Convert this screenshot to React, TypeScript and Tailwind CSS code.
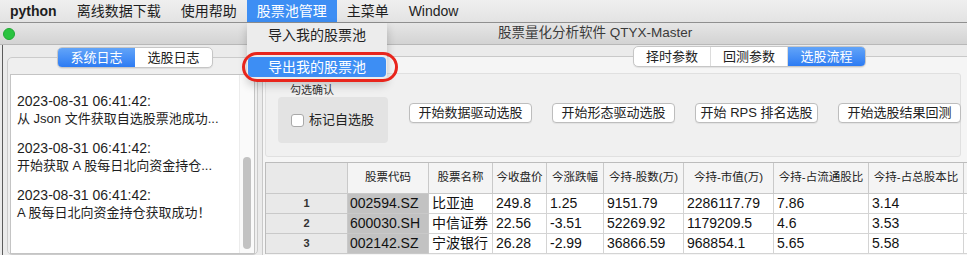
const logs = [
  ["2023-08-31 06:41:42:", "从 Json 文件获取自选股票池成功..."],
  ["2023-08-31 06:41:42:", "开始获取 A 股每日北向资金持仓..."],
  ["2023-08-31 06:41:42:", "A 股每日北向资金持仓获取成功！"],
];

const headers = ["", "股票代码", "股票名称", "今收盘价", "今涨跌幅", "今持-股数(万)", "今持-市值(万)", "今持-占流通股比", "今持-占总股本比", ""];

const rows = [
  ["1", "002594.SZ", "比亚迪", "249.8", "1.25", "9151.79", "2286117.79", "7.86", "3.14"],
  ["2", "600030.SH", "中信证券", "22.56", "-3.51", "52269.92", "1179209.5", "4.6", "3.53"],
  ["3", "002142.SZ", "宁波银行", "26.28", "-2.99", "36866.59", "968854.1", "5.65", "5.58"],
];

function Segmented({ items, active }: { items: string[]; active: number }) {
  return (
    <div className="flex h-[21px] rounded-[5px] border border-[#c6c6c6] bg-white shadow-[0_1px_1px_rgba(0,0,0,0.08)] overflow-hidden">
      {items.map((t, i) => (
        <div
          key={t}
          className={
            i === active
              ? "w-[77px] flex items-center justify-center text-[13px] text-white bg-gradient-to-b from-[#62a4f8] to-[#2c7bf3]"
              : "w-[77px] flex items-center justify-center text-[13px] text-[#222] border-r border-[#dcdcdc] last:border-r-0"
          }
        >
          {t}
        </div>
      ))}
    </div>
  );
}

function MenuBar() {
  const items = ["离线数据下载", "使用帮助", "股票池管理", "主菜单", "Window"];
  return (
    <div className="h-[23px] shrink-0 flex border-b border-[#8f8f8f] bg-gradient-to-b from-[#efefef] to-[#e3e3e3] text-[14px] text-[#1e1e1e]">
      <div className="px-[10px] flex items-center font-bold">python</div>
      {items.map((t) => (
        <div
          key={t}
          className={t === "股票池管理" ? "px-[10px] flex items-center bg-[#3d8ef4] text-white" : "px-[10px] flex items-center"}
        >
          {t}
        </div>
      ))}
    </div>
  );
}

function TitleBar() {
  return (
    <div className="h-[22px] shrink-0 flex items-center border-b border-[#b8b8b8] bg-gradient-to-b from-[#e6e6e6] to-[#d3d3d3]">
      <div className="ml-[3px] w-[12px] h-[12px] rounded-full bg-[#2ac340] border border-[#20a934]" />
      <div className="ml-[483px] text-[13.5px] text-[#3a3a3a]">股票量化分析软件 QTYX-Master</div>
    </div>
  );
}

function LogPanel() {
  return (
    <div className="w-[262px] shrink-0 pl-[2px] flex">
      <div className="flex-1 border-l border-[#5c5c5c] pl-[4px] pt-[2px] flex flex-col">
        <div className="relative z-10 flex pl-[50px]">
          <Segmented items={["系统日志", "选股日志"]} active={0} />
        </div>
        <div className="-mt-[11px] w-[251px] h-[220px] border border-[#cbcbcb] rounded-[5px] bg-[#efefef] pt-[16px] px-[2px]">
          <div className="relative h-[180px] border border-[#c4c4c4] bg-white pt-[18px] pl-[6px] leading-[17px] text-[#1e1e1e]">
            {logs.map(([a, b], i) => (
              <div key={i} className={i === 0 ? "" : "mt-[13px]"}>
                <div className="text-[14px]">{a}</div>
                <div className="text-[13px]">{b}</div>
              </div>
            ))}
            <div className="absolute right-0 top-0 bottom-0 w-[15px] border-l border-[#ececec] bg-[#fafafa]">
              <div className="absolute left-[3px] top-[82px] w-[8px] h-[92px] rounded-full bg-[#c2c2c2]" />
            </div>
          </div>
        </div>
      </div>
    </div>
  );
}

function StockTable() {
  return (
    <div className="grid grid-cols-[82px_81px_64px_54px_57px_80px_90px_95px_95px_20px] border-t border-l border-[#bcbcbc] bg-white">
      {headers.map((h, i) => (
        <div
          key={i}
          className={
            i === 0
              ? "h-[31px] border-r border-b border-[#c9c9c9] bg-[#e9e9e9]"
              : "h-[31px] flex items-center justify-center border-r border-b border-[#c9c9c9] bg-[#f4f4f4] text-[11.5px] text-[#222] whitespace-nowrap"
          }
        >
          {h}
        </div>
      ))}
      {rows.map((r) => (
        <>
          {r.map((c, j) => (
            <div
              key={r[0] + j}
              className={
                j === 0
                  ? "h-[20px] flex items-center justify-center border-r border-b border-[#c9c9c9] bg-[#e9e9e9] text-[11px] font-bold text-[#333]"
                  : j === 1
                  ? "h-[20px] flex items-center pl-[2px] border-r border-b border-[#c9c9c9] bg-[#c2c2c2] text-[14px] text-[#111]"
                  : "h-[20px] flex items-center pl-[3px] border-r border-b border-[#d4d4d4] text-[14px] text-[#111] whitespace-nowrap overflow-hidden"
              }
            >
              {c}
            </div>
          ))}
          <div key={r[0] + "x"} className="h-[20px] border-b border-[#d4d4d4]" />
        </>
      ))}
    </div>
  );
}

function MainPanel() {
  const buttons = ["开始数据驱动选股", "开始形态驱动选股", "开始 RPS 排名选股", "开始选股结果回测"];
  return (
    <div className="flex-1 min-w-0 overflow-hidden flex flex-col">
      <div className="relative z-10 flex justify-end pr-[101px] pt-[1px]">
        <Segmented items={["择时参数", "回测参数", "选股流程"]} active={2} />
      </div>
      <div className="-mt-[11px] flex-1 border-t border-l border-[#c9c9c9] bg-[#f5f5f5] pl-[2px] pt-[16px]">
        <div className="w-[696px] h-[84px] flex items-start border border-[#e0e0e0] rounded-[3px] bg-[#f0f0f0]">
          <div className="ml-[12px] pt-[9px]">
            <div className="pl-[12px] text-[11px] leading-[14px] text-[#333]">勾选确认</div>
            <div className="w-[110px] h-[46px] rounded-[4px] bg-[#e3e3e3] flex items-center pl-[13px]">
              <div className="w-[13px] h-[13px] rounded-[3px] border border-[#a9a9a9] bg-white" />
              <span className="ml-[5px] text-[13px] text-[#222]">标记自选股</span>
            </div>
          </div>
          <div className="ml-[21px] mt-[29px] flex gap-[20px]">
            {buttons.map((b) => (
              <div
                key={b}
                className="w-[123px] h-[20px] flex items-center justify-center rounded-[4px] border border-[#bdbdbd] bg-white shadow-[0_1px_1px_rgba(0,0,0,0.06)] text-[13px] text-[#222]"
              >
                {b}
              </div>
            ))}
          </div>
        </div>
        <div className="mt-[5px] w-[740px]">
          <StockTable />
        </div>
      </div>
    </div>
  );
}

export default function App() {
  return (
    <div className="relative w-[967px] h-[255px] overflow-hidden bg-[#ebebeb] flex flex-col font-['Liberation_Sans','Noto_Sans_CJK_SC',sans-serif]">
      <MenuBar />
      <TitleBar />
      <div className="flex flex-1 min-h-0">
        <LogPanel />
        <MainPanel />
      </div>
      <div className="absolute left-[247px] top-[23px] w-[140px] bg-[#ececec] shadow-[0_4px_10px_rgba(0,0,0,0.2)] rounded-b-[5px] pb-[4px] text-[14px]">
        <div className="h-[25px] flex items-center pl-[21px] text-[#222]">导入我的股票池</div>
        <div className="h-[9px]" />
        <div className="h-[20px] mx-[1px] flex items-center pl-[20px] rounded-[4px] bg-[#3d8ef4] text-white">导出我的股票池</div>
      </div>
      <div className="absolute left-[242px] top-[52px] w-[156px] h-[30px] rounded-full border-[3px] border-[#e8251c]" />
    </div>
  );
}
